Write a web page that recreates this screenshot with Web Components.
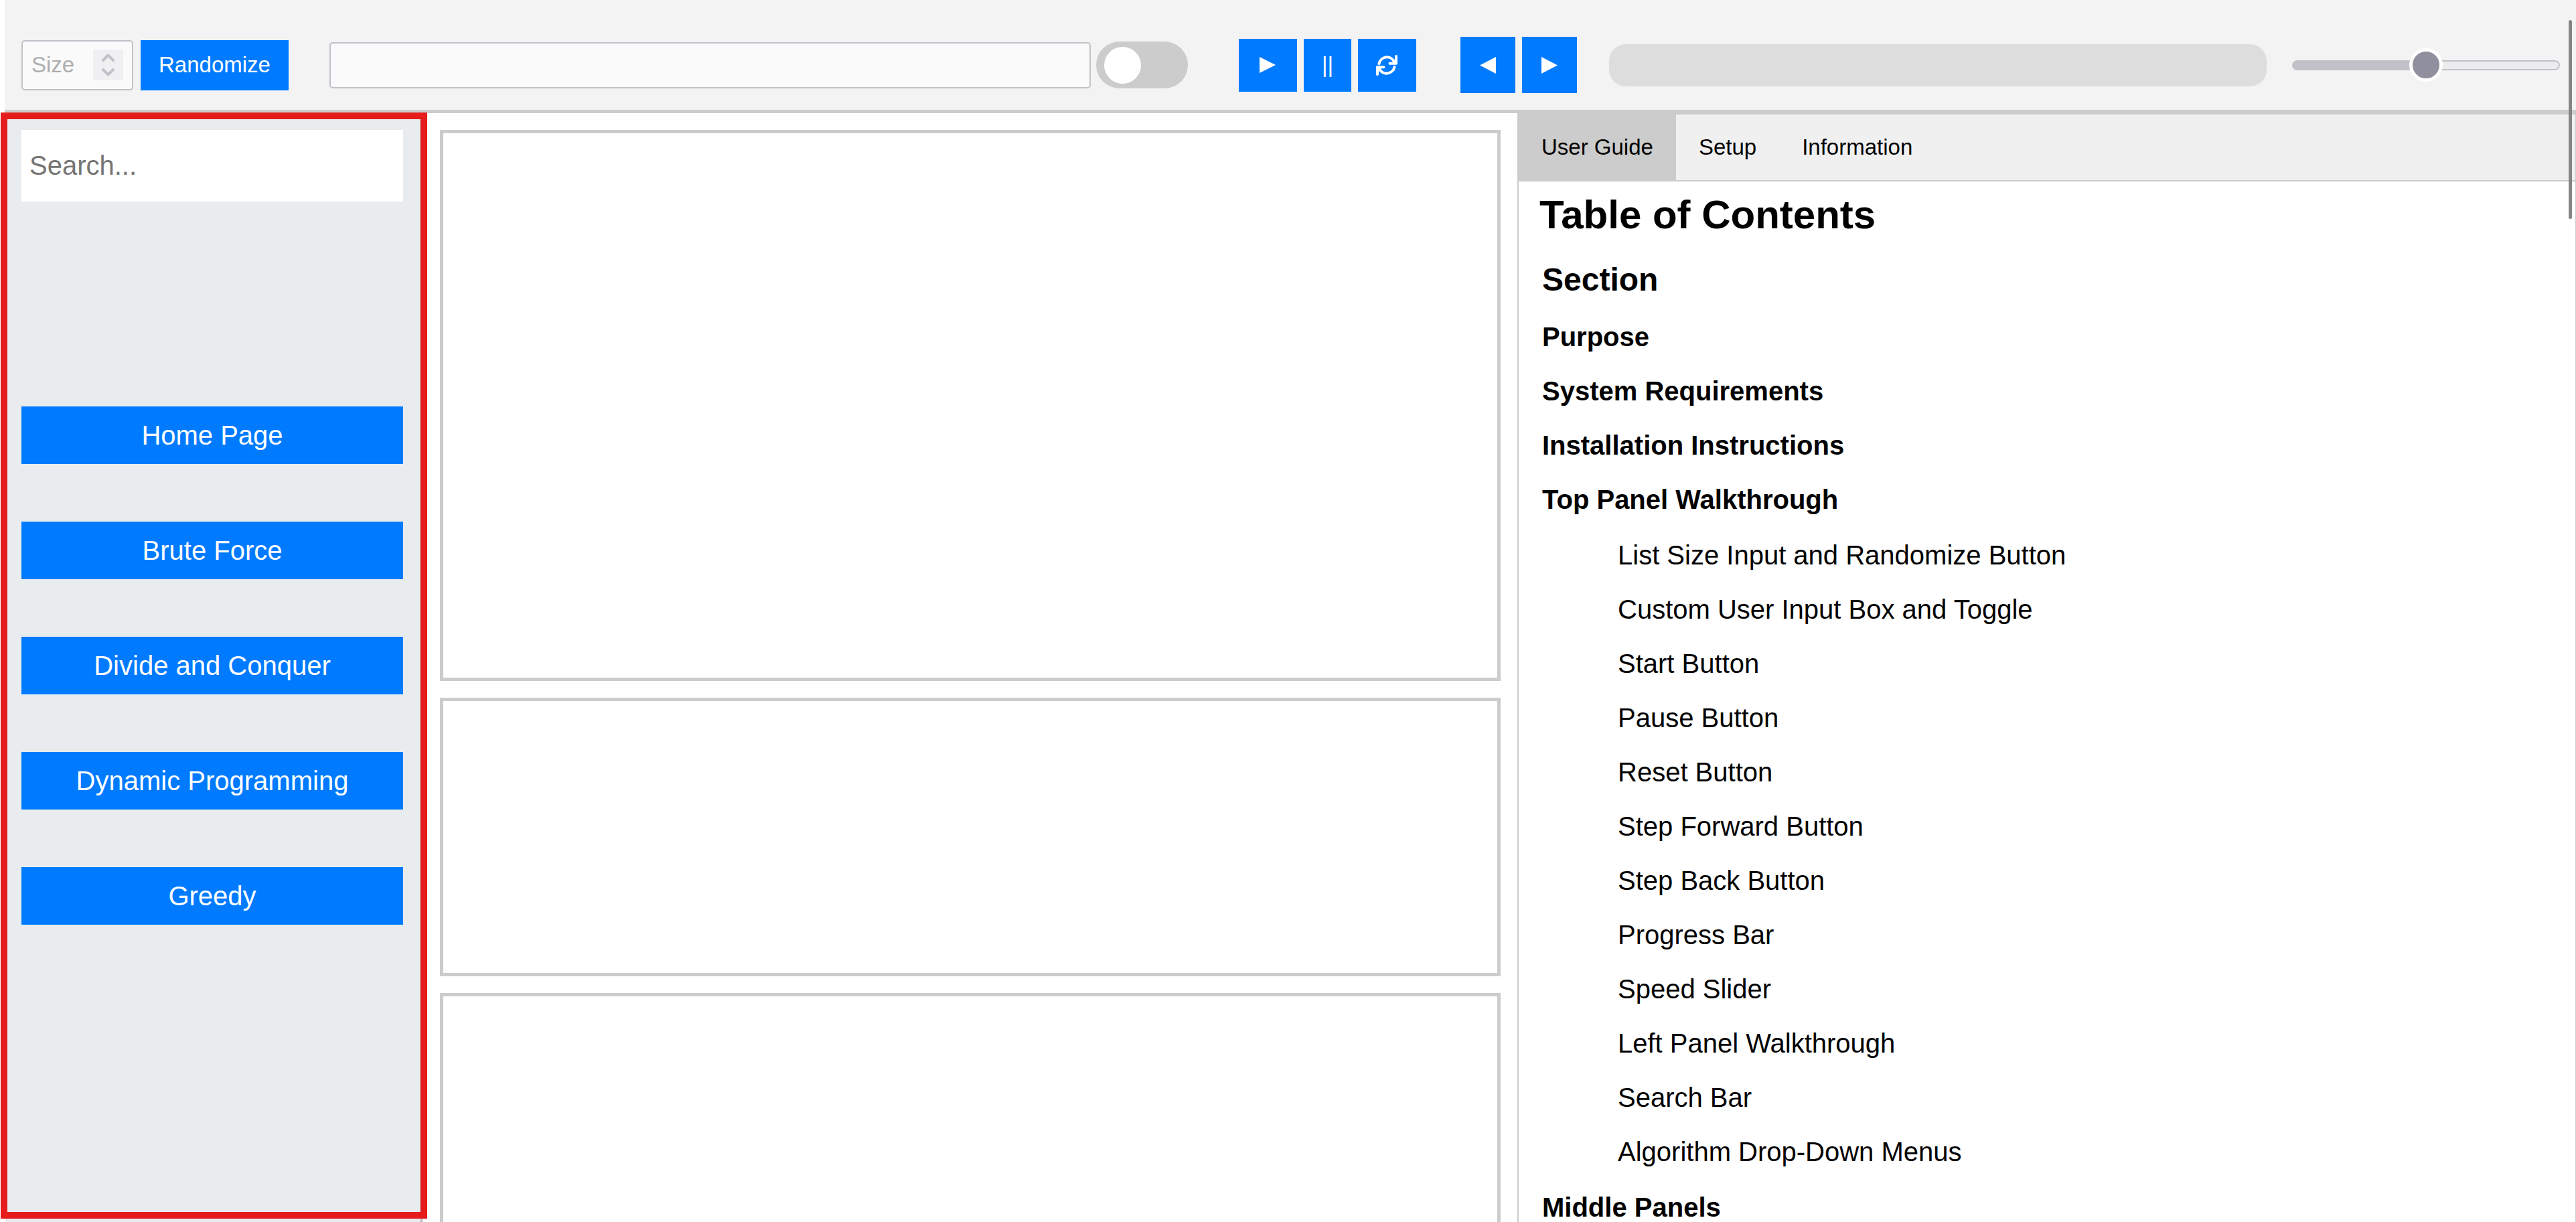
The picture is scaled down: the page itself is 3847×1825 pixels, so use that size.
<!DOCTYPE html>
<html lang="en">
<head>
<meta charset="utf-8">
<title>Algorithm Visualizer</title>
<style>
html, body { height: 100%; }
body { margin: 0; background: #fff; font-family: "Liberation Sans", Arial, sans-serif; font-size: 33px; color: #000; overflow: hidden; }
</style>
</head>
<body>
<visualizer-app></visualizer-app>
<script>
const base = `*, *::before, *::after { box-sizing: border-box; } button, input { font: inherit; margin: 0; }`;
function define(name, html, setup) {
  const template = document.createElement('template');
  template.innerHTML = html;
  customElements.define(name, class extends HTMLElement {
    constructor() {
      super();
      this.attachShadow({ mode: 'open' }).appendChild(template.content.cloneNode(true));
    }
    connectedCallback() { if (setup) setup(this, this.shadowRoot); }
  });
}

define('action-button', `<style>${base}
:host { display: block; }
button { display: flex; align-items: center; justify-content: center; width: 100%; height: var(--button-height, 79px); padding: 0 27px; border: 0; background: #007bff; color: #fff; white-space: nowrap; }
</style><button type="button"><slot></slot></button>`, (host, root) => {
  if (host.getAttribute('label')) root.querySelector('button').setAttribute('aria-label', host.getAttribute('label'));
});

define('size-input', `<style>${base}
:host { display: flex; align-items: center; box-sizing: border-box; width: 167px; height: 75px; padding: 0 13px; border: 2px solid #c1c1c9; border-radius: 5px; background: #fafafa; }
input { flex: 1; min-width: 0; border: 0; padding: 0; background: none; outline: 0; appearance: textfield; }
input::-webkit-inner-spin-button { display: none; }
input::placeholder { color: #aeaeae; opacity: 1; }
svg { flex: none; width: 45px; height: 46px; background: #f0f0f2; }
</style><input type="number" placeholder="Size" aria-label="Size">
<svg viewBox="0 0 45 46" fill="none" stroke="#c1c1c9" stroke-width="4" stroke-linecap="round" stroke-linejoin="round"><path d="M15 16l7.500-7.500 7.500 7.500M15 30l7.500 7.500 7.500-7.500"/></svg>`);

define('toggle-switch', `<style>${base}
:host { display: block; }
label { display: flex; align-items: center; width: 137px; height: 70px; padding: 0 12px; border-radius: 35px; background: #ccc; }
input { appearance: none; width: 55px; height: 55px; border-radius: 50%; background: #fff; }
</style><label><input type="checkbox" role="switch" aria-label="Custom input"></label>`);

define('speed-slider', `<style>${base}
:host { display: flex; }
input { appearance: none; width: 100%; height: 50px; background: none; }
input::-webkit-slider-runnable-track { height: 15px; border: 2px solid #c1c1c9; border-radius: 8px; background: linear-gradient(90deg, #c1c1c7 50%, #ececee 50%); }
input::-webkit-slider-thumb { appearance: none; width: 50px; height: 50px; margin-top: -20px; border: 5px solid #fff; border-radius: 50%; background: #8f8f9d; }
</style><input type="range" min="0" max="100" value="50" aria-label="Speed">`);

define('top-panel', `<style>${base}
:host { display: flex; align-items: center; box-sizing: border-box; height: 169px; padding: 30px 24px 0 25px; margin-left: 7px; background: #f3f3f3; border-bottom: 5px solid #ccc; }
.bar { display: flex; flex: 1; align-items: center; min-width: 0; }
.bar > * { flex: none; }
.randomize { --button-height: 75px; margin-left: 11px; }
.bar > .custom { flex: 1133; min-width: 0; height: 69px; margin: 0 8px 0 61px; border: 2px solid #c1c1c9; border-radius: 5px; background: #fafafa; padding: 0; text-indent: 12px; }
.group { display: flex; gap: 10px; }
.play { margin-left: 76px; }
.play .wide { width: 87px; }
.play .slim { width: 71px; }
.step { --button-height: 84px; margin-left: 66px; }
.step action-button { width: 82px; }
.bar > .progress { flex: 982; height: 63px; margin: 0 38px 0 48px; border-radius: 25px; background: #ddd; }
.bar > speed-slider { flex: 400; min-width: 0; }
svg { display: block; fill: currentColor; }
svg.line { fill: none; stroke: currentColor; stroke-width: 4; stroke-linecap: round; stroke-linejoin: round; }
</style>
<div class="bar">
<size-input></size-input>
<action-button class="randomize">Randomize</action-button>
<input class="custom" type="text" aria-label="Custom input values">
<toggle-switch></toggle-switch>
<div class="group play">
<action-button class="wide" label="Start"><svg width="24" height="24" viewBox="0 0 24 24"><path d="M0 0L24 12L0 24z"/></svg></action-button>
<action-button class="slim" label="Pause">||</action-button>
<action-button class="wide" label="Reset"><svg class="line" width="32" height="31" viewBox="0 0 32 31"><path d="M4.500 13A12 12 0 0 1 27 10L30 12.700M30 2V12.700H20.500M27.500 18A12 12 0 0 1 5 21L2 18.300M2 29V18.300H11.500"/></svg></action-button>
</div>
<div class="group step">
<action-button label="Step back"><svg width="24" height="25" viewBox="0 0 24 25"><path d="M24 0L0 12.500L24 25z"/></svg></action-button>
<action-button label="Step forward"><svg width="24" height="25" viewBox="0 0 24 25"><path d="M0 0L24 12.500L0 25z"/></svg></action-button>
</div>
<div class="progress" role="progressbar" aria-label="Progress"></div>
<speed-slider></speed-slider>
</div>`);

define('left-panel', `<style>${base}
:host { display: block; position: relative; margin-left: 7px; padding: 25px; background: #e8ecef; border-right: 5px solid #ccc; font-size: 40px; }
input { display: block; width: 100%; height: 107px; padding: 0 12px; border: 0; background: #fff; }
input::placeholder { color: #757575; opacity: 1; }
nav { display: flex; flex-direction: column; gap: 86px; margin-top: 306px; --button-height: 86px; }
.highlight { position: absolute; inset: -1px -11px 5px -6px; border: 10px solid #e61b1b; pointer-events: none; }
</style>
<input type="search" placeholder="Search..." aria-label="Search">
<nav><action-button>Home Page</action-button><action-button>Brute Force</action-button><action-button>Divide and Conquer</action-button><action-button>Dynamic Programming</action-button><action-button>Greedy</action-button></nav>
<div class="highlight"></div>`);

define('middle-panels', `<style>${base}
:host { display: flex; flex-direction: column; gap: 25px; padding: 25px; overflow: hidden; }
section { flex: none; border: 5px solid #ccc; background: #fff; }
.graph { height: 823px; }
.steps, .code { height: 416px; }
</style><section class="graph"></section><section class="steps"></section><section class="code"></section>`);

define('tab-bar', `<style>${base}
:host { display: flex; box-sizing: border-box; height: 100px; background: #f0f0f0; border-bottom: 2px solid #ccc; }
button { border: 0; padding: 0 34px; background: none; color: #000; }
button[aria-selected=true] { background: #ccc; }
</style><button role="tab" aria-selected="true">User Guide</button><button role="tab" aria-selected="false">Setup</button><button role="tab" aria-selected="false">Information</button>`);

define('guide-contents', `<style>${base}
:host { display: block; padding: 14px 31px 0; font-size: 40px; }
h1, h2, h3, p { margin: 0; white-space: nowrap; }
h1 { font-size: 60px; line-height: 72px; }
.list { padding: 20px 0 0 4px; }
h2 { font-size: 48px; line-height: 82px; padding-bottom: 4px; }
h3 { font-size: 40px; line-height: 81px; }
.items { padding: 2px 0 2px 113px; }
p { line-height: 81px; }
</style>
<h1>Table of Contents</h1>
<div class="list"><h2>Section</h2>
<h3>Purpose</h3><h3>System Requirements</h3><h3>Installation Instructions</h3><h3>Top Panel Walkthrough</h3>
<div class="items"><p>List Size Input and Randomize Button</p><p>Custom User Input Box and Toggle</p><p>Start Button</p><p>Pause Button</p><p>Reset Button</p><p>Step Forward Button</p><p>Step Back Button</p><p>Progress Bar</p><p>Speed Slider</p><p>Left Panel Walkthrough</p><p>Search Bar</p><p>Algorithm Drop-Down Menus</p></div>
<h3>Middle Panels</h3></div>`);

define('right-panel', `<style>${base}
:host { display: block; border: 2px solid #ccc; border-bottom: 0; border-right-width: 1px; overflow: hidden; background: #fff; }
</style><tab-bar role="tablist"></tab-bar><guide-contents></guide-contents>`);

define('visualizer-app', `<style>${base}
:host { position: relative; display: flex; flex-direction: column; height: 100vh; overflow: hidden; }
main { flex: 1; min-height: 0; display: grid; grid-template-columns: 632fr 1634fr 1581fr; grid-template-rows: 100%; }
main > * { min-width: 0; }
.scroll { position: absolute; top: 30px; right: 6px; width: 5px; height: 297px; border-radius: 3px; background: #858585; }
</style>
<top-panel></top-panel>
<main><left-panel></left-panel><middle-panels></middle-panels><right-panel></right-panel></main>
<div class="scroll"></div>`);
</script>
</body>
</html>
